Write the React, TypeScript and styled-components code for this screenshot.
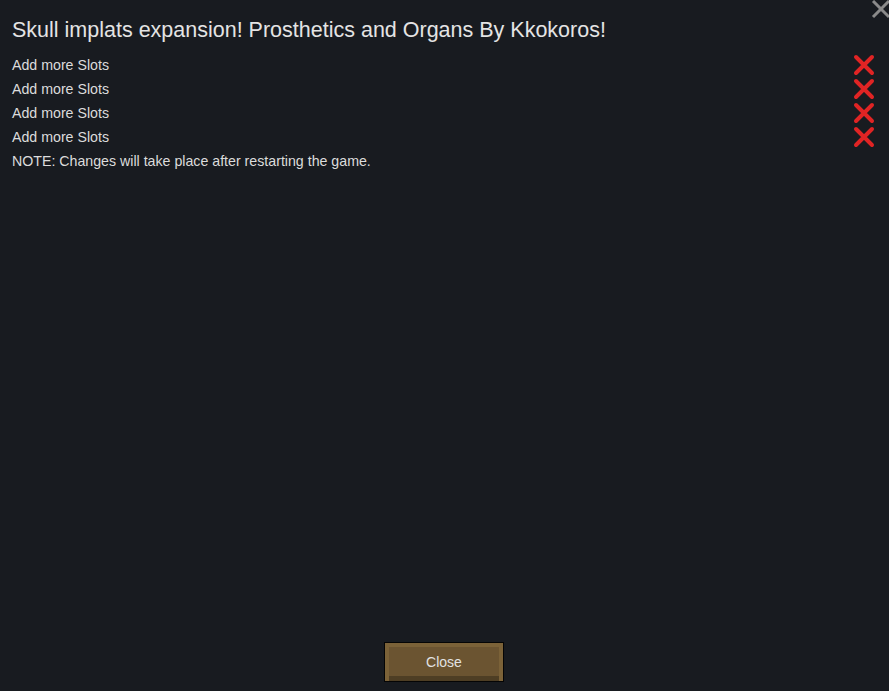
import styled, { createGlobalStyle } from "styled-components";

const GlobalStyle = createGlobalStyle`
  html, body {
    margin: 0;
    padding: 0;
    background: #181b20;
  }
  body {
    font-family: "Liberation Sans", Arial, sans-serif;
  }
`;

const Window = styled.div`
  position: relative;
  width: 889px;
  height: 691px;
  background: #181b20;
  color: #dedede;
  display: flex;
  flex-direction: column;
  box-sizing: border-box;
  padding: 17px 13px 9px 12px;
  overflow: hidden;
`;

const CloseCorner = styled.button`
  position: absolute;
  top: 0;
  right: -2px;
  width: 20px;
  height: 20px;
  padding: 0;
  border: none;
  background: none;
  cursor: pointer;
`;

const Title = styled.h1`
  margin: 0 0 10px;
  font-size: 21.5px;
  font-weight: 400;
  line-height: 26px;
  color: #e4e4e4;
`;

const List = styled.div`
  display: flex;
  flex-direction: column;
`;

const Row = styled.div`
  display: flex;
  align-items: center;
  justify-content: space-between;
  height: 24px;
  font-size: 14.2px;
  color: #dcdcdc;
`;

const RemoveButton = styled.button`
  width: 24px;
  height: 24px;
  padding: 0;
  border: none;
  background: none;
  cursor: pointer;
  display: flex;
  align-items: center;
  justify-content: center;
`;

const Note = styled.div`
  height: 24px;
  line-height: 24px;
  font-size: 14.2px;
  color: #dcdcdc;
`;

const Footer = styled.div`
  margin-top: auto;
  display: flex;
  justify-content: center;
`;

const CloseButton = styled.button`
  width: 120px;
  height: 40px;
  box-sizing: border-box;
  border: 1px solid #050505;
  background: #6b5431;
  box-shadow:
    inset 4px 4px 0 #7b6238,
    inset -4px 0 0 #7b6238,
    inset 0 -5px 0 #4e3e24;
  color: #e2e2e2;
  font-family: "Liberation Sans", Arial, sans-serif;
  font-size: 14px;
  cursor: pointer;
`;

const RedX = () => (
  <svg width="22" height="22" viewBox="0 0 22 22">
    <path
      d="M3 3 L19 19 M19 3 L3 19"
      stroke="#e02424"
      strokeWidth="4"
      strokeLinecap="round"
    />
  </svg>
);

const GreyX = () => (
  <svg width="20" height="20" viewBox="0 0 20 20">
    <path d="M2 1 L18 17 M18 1 L2 17" stroke="#8a8a8a" strokeWidth="3" />
  </svg>
);

const slots = ["Add more Slots", "Add more Slots", "Add more Slots", "Add more Slots"];

export default function App() {
  return (
    <>
      <GlobalStyle />
      <Window>
        <CloseCorner aria-label="Close window">
          <GreyX />
        </CloseCorner>
        <Title>Skull implats expansion! Prosthetics and Organs By Kkokoros!</Title>
        <List>
          {slots.map((label, i) => (
            <Row key={i}>
              <span>{label}</span>
              <RemoveButton aria-label="Remove">
                <RedX />
              </RemoveButton>
            </Row>
          ))}
          <Note>NOTE: Changes will take place after restarting the game.</Note>
        </List>
        <Footer>
          <CloseButton>Close</CloseButton>
        </Footer>
      </Window>
    </>
  );
}
